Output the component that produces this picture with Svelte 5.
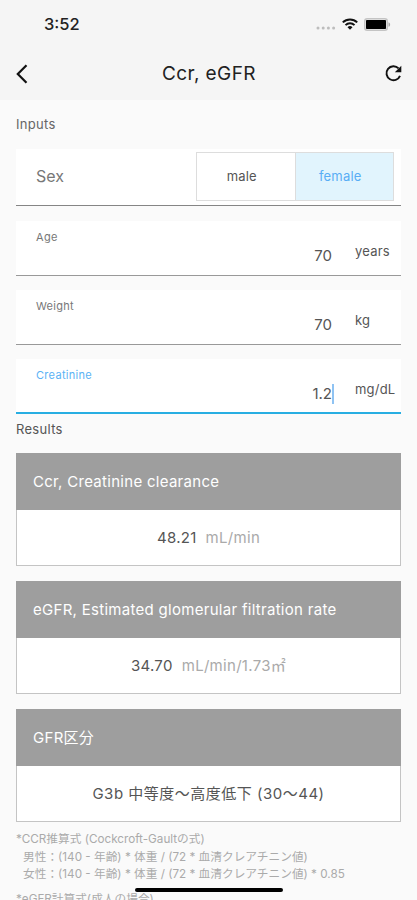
<script lang="ts">
	type Field = { label: string; value: string; unit: string; focused?: boolean };

	const fields: Field[] = [
		{ label: 'Age', value: '70', unit: 'years' },
		{ label: 'Weight', value: '70', unit: 'kg' },
		{ label: 'Creatinine', value: '1.2', unit: 'mg/dL', focused: true }
	];

	const results = [
		{ title: 'Ccr, Creatinine clearance', value: '48.21', unit: 'mL/min' },
		{ title: 'eGFR, Estimated glomerular filtration rate', value: '34.70', unit: 'mL/min/1.73㎡' },
		{ title: 'GFR区分', value: 'G3b 中等度〜高度低下 (30〜44)', unit: '' }
	];

	let sex = $state('female');
</script>

<div class="screen">
	<header>
		<div class="status">
			<span class="time">3:52</span>
			<div class="indicators">
				<svg class="signal" width="20" height="4" viewBox="0 0 20 4" fill="#bdbdbd">
					<circle cx="2" cy="2" r="1.5" />
					<circle cx="7.2" cy="2" r="1.5" />
					<circle cx="12.4" cy="2" r="1.5" />
					<circle cx="17.6" cy="2" r="1.5" />
				</svg>
				<svg class="wifi" width="16" height="12" viewBox="0 0 16 12" fill="none" stroke="#111" stroke-width="2">
					<path d="M.8 4.4a10.2 10.2 0 0 1 14.4 0" />
					<path d="M3.5 7.1a6.4 6.4 0 0 1 9 0" />
					<path d="M8 11.8 5.5 9.2a3.5 3.5 0 0 1 5 0z" fill="#111" stroke="none" />
				</svg>
				<svg class="battery" width="27" height="13" viewBox="0 0 27 13">
					<rect x=".75" y=".75" width="22.5" height="11.5" rx="2.5" fill="#f5f5f5" stroke="#c4c4c4" stroke-width="1.5" />
					<rect x="2" y="2" width="20" height="9" rx=".8" fill="#000" />
					<path d="M24.5 4.2c2.2.8 2.2 3.8 0 4.6z" fill="#a8a8a8" />
				</svg>
			</div>
		</div>
		<nav>
			<button class="icon" aria-label="Back">
				<svg width="12" height="20" viewBox="0 0 12 20" fill="none" stroke="#111" stroke-width="2.2">
					<path d="M10.5 1.2 1.8 10l8.7 8.8" />
				</svg>
			</button>
			<h1>Ccr, eGFR</h1>
			<button class="icon" aria-label="Reset">
				<svg width="17" height="17" viewBox="0 0 17 17">
					<path d="M13.6 3.4A7 7 0 1 0 15 10.8" fill="none" stroke="#111" stroke-width="1.9" />
					<path d="M16.3.8v6.5H9.8z" fill="#111" />
				</svg>
			</button>
		</nav>
	</header>

	<main>
		<h2 class="inputs-title">Inputs</h2>
		<div class="sex-row">
			<span class="sex-label">Sex</span>
			<div class="toggle">
				{#each ['male', 'female'] as option}
					<button class:selected={sex === option} onclick={() => (sex = option)}>{option}</button>
				{/each}
			</div>
		</div>

		{#each fields as field}
			<div class="field" class:focused={field.focused}>
				<span class="label">{field.label}</span>
				<div class="entry">
					<span class="value">{field.value}</span>
					<span class="caret"></span>
					<span class="unit">{field.unit}</span>
				</div>
			</div>
		{/each}

		<h2 class="results-title">Results</h2>
		{#each results as result}
			<section class="card">
				<h3>{result.title}</h3>
				<p class:wide={!result.unit}>
					<span>{result.value}</span>
					{#if result.unit}
						<span class="result-unit">{result.unit}</span>
					{/if}
				</p>
			</section>
		{/each}

		<div class="notes">
			<p>*CCR推算式 (Cockcroft-Gaultの式)</p>
			<p class="formula">男性：(140 - 年齢) * 体重 / (72 * 血清クレアチニン値)</p>
			<p class="formula">女性：(140 - 年齢) * 体重 / (72 * 血清クレアチニン値) * 0.85</p>
			<p class="next">*eGFR計算式(成人の場合)</p>
		</div>
	</main>

	<div class="home-indicator"></div>
</div>

<style>
	:global(body) {
		background: #fafafa;
	}

	.screen {
		position: relative;
		box-sizing: border-box;
		width: 417px;
		height: 900px;
		overflow: hidden;
		background: #fafafa;
		color: #555;
		font-family: Inter, 'Noto Sans CJK JP', sans-serif;
	}

	h1,
	h2,
	h3,
	p {
		margin: 0;
		font-weight: 400;
	}

	button {
		padding: 0;
		border: 0;
		background: none;
		font: inherit;
		color: inherit;
	}

	svg {
		display: block;
	}

	header {
		height: 100px;
		background: #f5f5f5;
	}

	.status {
		display: flex;
		justify-content: space-between;
		height: 48px;
		padding: 0 26px 0 44px;
		align-items: center;
	}

	.time {
		color: #222;
		font-size: 16.5px;
		font-weight: 500;
		line-height: 20px;
	}

	.indicators {
		display: flex;
		align-items: center;
	}

	.signal {
		margin: 8px 6px 0 0;
	}

	.wifi {
		margin-right: 6px;
	}

	nav {
		display: flex;
		align-items: center;
		justify-content: space-between;
		height: 51px;
		padding: 0 15px 0 16px;
	}

	.icon {
		width: 17px;
	}

	h1 {
		color: #222;
		font-size: 19px;
		letter-spacing: 0.4px;
	}

	main {
		padding: 0 16px;
	}

	h2 {
		font-size: 13px;
		letter-spacing: 0.3px;
		line-height: 16px;
	}

	.inputs-title {
		padding: 16px 0 17px;
		color: #666;
	}

	.sex-row {
		box-sizing: border-box;
		display: flex;
		align-items: center;
		justify-content: space-between;
		height: 57px;
		margin-bottom: 15px;
		padding: 0 7px 2px 20px;
		border-bottom: 1px solid #858585;
		background: #fff;
	}

	.sex-label {
		color: #777;
		font-size: 16px;
	}

	.toggle {
		box-sizing: border-box;
		display: flex;
		width: 198px;
		height: 49px;
		border: 1px solid #ddd;
	}

	.toggle button {
		flex: 1;
		padding-right: 8px;
		font-size: 13px;
		letter-spacing: 0.2px;
	}

	.toggle button + button {
		border-left: 1px solid #ddd;
	}

	.toggle .selected {
		background: #e1f4fd;
		color: #58adf5;
	}

	.field {
		box-sizing: border-box;
		height: 55px;
		margin-bottom: 14px;
		padding: 9px 0 0 20px;
		border-bottom: 1px solid #999;
		background: #fff;
	}

	.label {
		display: block;
		color: #777;
		font-size: 11px;
		letter-spacing: 0.3px;
		line-height: 14px;
	}

	.entry {
		display: flex;
		align-items: center;
		height: 23px;
	}

	.value {
		flex: 1;
		font-size: 15px;
		text-align: right;
	}

	.caret {
		width: 2px;
		height: 20px;
	}

	.unit {
		width: 46px;
		padding-left: 21px;
		margin-top: -10px;
		font-size: 13px;
		letter-spacing: 0.2px;
		white-space: nowrap;
	}

	.focused {
		margin-bottom: 7px;
		border-bottom: 2px solid #28aee2;
	}

	.focused .label {
		color: #5ab2f5;
	}

	.focused .caret {
		background: #8fc3f3;
	}

	.results-title {
		padding-bottom: 16px;
	}

	.card {
		box-sizing: border-box;
		height: 113px;
		margin-bottom: 15px;
		border: 1px solid #c4c4c4;
		background: #fff;
	}

	.card h3 {
		height: 57px;
		margin: -1px -1px 0;
		padding-left: 17px;
		background: #9e9e9e;
		color: #fff;
		font-size: 15px;
		letter-spacing: 0.29px;
		line-height: 57px;
	}

	.card p {
		display: flex;
		justify-content: center;
		gap: 9px;
		font-size: 15px;
		letter-spacing: 0.3px;
		line-height: 55px;
	}

	.card .wide {
		letter-spacing: 0.5px;
	}

	.result-unit {
		color: #aaa;
	}

	.notes {
		margin-top: -6px;
		color: #aaa;
		font-size: 11.7px;
		line-height: 17.7px;
		white-space: nowrap;
	}

	.formula {
		padding-left: 7px;
	}

	.next {
		margin-top: 7px;
	}

	.home-indicator {
		position: absolute;
		left: 135px;
		top: 888px;
		width: 148px;
		height: 4px;
		border-radius: 2px;
		background: #000;
	}
</style>
